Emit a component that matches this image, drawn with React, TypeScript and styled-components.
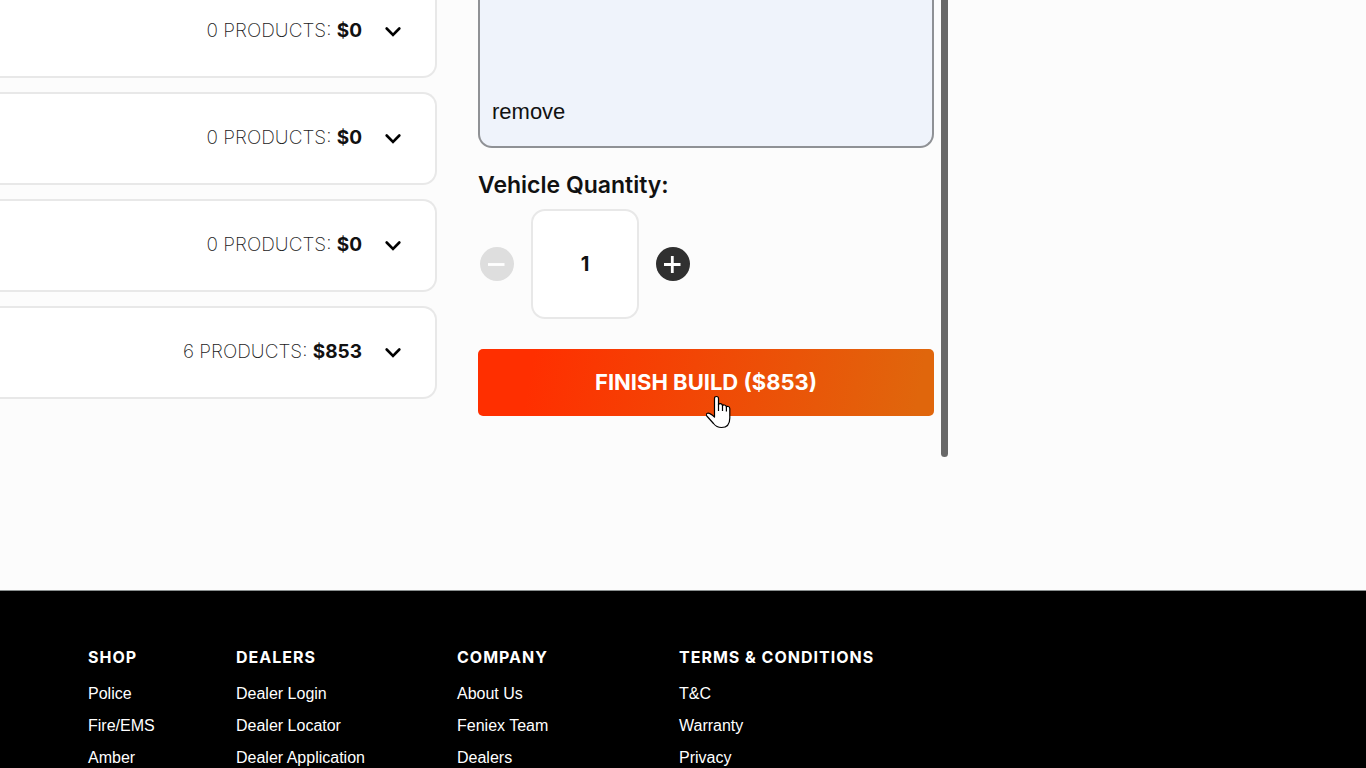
import React, { useState } from "react";
import styled, { createGlobalStyle } from "styled-components";

const GlobalStyle = createGlobalStyle`
  *, *::before, *::after { box-sizing: border-box; }
  body {
    margin: 0;
    background: #fcfcfc;
    color: #111;
    font-family: Inter, "Liberation Sans", sans-serif;
  }
  button, input { font-family: inherit; }
`;

const Page = styled.div`
  min-height: 100vh;
  display: flex;
  flex-direction: column;
`;

const Builder = styled.main`
  display: grid;
  grid-template-columns: 437fr 511fr 418fr;
  min-height: 590px;
  overflow: hidden;
`;

const Categories = styled.section`
  display: flex;
  flex-direction: column;
  gap: 14px;
  margin-top: -15px;
`;

const CategoryCard = styled.button`
  display: flex;
  align-items: center;
  justify-content: flex-end;
  gap: 23px;
  height: 93px;
  padding: 0 34px 2px 0;
  background: #fff;
  border: 2px solid #e8e8e8;
  border-left: 0;
  border-radius: 0 14px 14px 0;
  color: #111;
  cursor: pointer;
`;

const Summary = styled.span`
  color: #222;
  font-size: 19px;
  line-height: 24px;
  font-weight: 200;
  white-space: nowrap;
`;

const Price = styled.strong`
  color: #111;
  font-weight: 700;
`;

const Chevron = styled.svg`
  width: 16px;
  height: 10px;
  margin-top: 2px;
`;

const Side = styled.aside`
  display: flex;
  align-items: flex-start;
  gap: 7px;
  padding-left: 41px;
`;

const SideContent = styled.div`
  flex: 1;
  min-width: 0;
`;

const ScrollThumb = styled.div`
  width: 7px;
  height: 457px;
  border-radius: 0 0 4px 4px;
  background: #686868;
`;

const VehiclePanel = styled.div`
  display: flex;
  align-items: flex-end;
  height: 148px;
  padding: 0 12px 20px;
  background: #eff3fb;
  border: 2px solid #8f9195;
  border-top: 0;
  border-radius: 0 0 14px 14px;
`;

const RemoveButton = styled.button`
  padding: 0;
  border: 0;
  background: none;
  color: #111;
  font-family: "Liberation Sans", sans-serif;
  font-size: 22px;
  line-height: 28px;
  cursor: pointer;
`;

const QuantityLabel = styled.label`
  display: block;
  margin-top: 22px;
  font-size: 23px;
  line-height: 30px;
  font-weight: 600;
`;

const QuantityRow = styled.div`
  display: flex;
  align-items: center;
  gap: 17px;
  margin-top: 9px;
  padding-left: 2px;
`;

const StepButton = styled.button`
  display: flex;
  width: 34px;
  height: 34px;
  padding: 0;
  border: 0;
  border-radius: 50%;
  background: #303030;
  cursor: pointer;

  &:disabled {
    background: #dedede;
    cursor: default;
  }
`;

const QuantityInput = styled.input`
  width: 108px;
  height: 110px;
  padding: 0;
  border: 2px solid #e8e8e8;
  border-radius: 14px;
  background: #fff;
  color: #111;
  font-size: 20px;
  font-weight: 700;
  text-align: center;
`;

const FinishButton = styled.button`
  display: block;
  position: relative;
  width: 100%;
  height: 67px;
  margin-top: 30px;
  padding: 0 0 2px;
  border: 0;
  border-radius: 5px;
  background: linear-gradient(100deg, #ff2f00 12%, #e0660c 96%);
  color: #fff;
  font-size: 22px;
  line-height: 30px;
  font-weight: 700;
  cursor: pointer;
`;

const Pointer = styled.svg`
  position: absolute;
  left: 50%;
  top: 46px;
  width: 26px;
  height: 34px;
`;

const Footer = styled.footer`
  flex: 1;
  display: grid;
  grid-template-columns: 148fr 221fr 222fr 687fr;
  padding: 56px 0 0 88px;
  border-top: 1px solid #8a8f8f;
  background: #000;
  color: #fff;
`;

const FooterTitle = styled.h2`
  margin: 0 0 17px;
  font-size: 16px;
  line-height: 20px;
  font-weight: 700;
  letter-spacing: 1px;
  white-space: nowrap;
`;

const FooterList = styled.ul`
  display: flex;
  flex-direction: column;
  gap: 12px;
  margin: 0;
  padding: 0;
  list-style: none;
  font-family: "Liberation Sans", sans-serif;
  font-size: 16px;
  line-height: 20px;
  white-space: nowrap;
`;

const FooterLink = styled.a`
  display: block;
  color: #fff;
  text-decoration: none;
`;

const categories = [
  { count: 0, total: 0 },
  { count: 0, total: 0 },
  { count: 0, total: 0 },
  { count: 6, total: 853 },
];

const footerColumns = [
  { title: "SHOP", links: ["Police", "Fire/EMS", "Amber"] },
  { title: "DEALERS", links: ["Dealer Login", "Dealer Locator", "Dealer Application"] },
  { title: "COMPANY", links: ["About Us", "Feniex Team", "Dealers"] },
  { title: "TERMS & CONDITIONS", links: ["T&C", "Warranty", "Privacy"] },
];

export default function App() {
  const [quantity, setQuantity] = useState(1);

  return (
    <Page>
      <GlobalStyle />
      <Builder>
        <Categories>
          {categories.map(({ count, total }, i) => (
            <CategoryCard key={i} type="button">
              <Summary>
                {count} PRODUCTS: <Price>${total}</Price>
              </Summary>
              <Chevron viewBox="0 0 16 10" fill="none" stroke="#000" strokeWidth="2.6" strokeLinecap="round" aria-hidden="true">
                <path d="M1.7 1.5 L8 7.8 L14.3 1.5" />
              </Chevron>
            </CategoryCard>
          ))}
        </Categories>
        <Side>
          <SideContent>
            <VehiclePanel>
              <RemoveButton type="button">remove</RemoveButton>
            </VehiclePanel>
            <QuantityLabel htmlFor="quantity">Vehicle Quantity:</QuantityLabel>
            <QuantityRow>
              <StepButton
                type="button"
                aria-label="Decrease quantity"
                disabled={quantity <= 1}
                onClick={() => setQuantity(quantity - 1)}
              >
                <svg width="34" height="34" viewBox="0 0 34 34" stroke="#fff" strokeWidth="2.8">
                  <path d="M8 17.5H24.5" />
                </svg>
              </StepButton>
              <QuantityInput
                id="quantity"
                type="text"
                inputMode="numeric"
                value={quantity}
                onChange={(e) => setQuantity(Math.max(1, Number(e.target.value) || 1))}
              />
              <StepButton type="button" aria-label="Increase quantity" onClick={() => setQuantity(quantity + 1)}>
                <svg width="34" height="34" viewBox="0 0 34 34" stroke="#fff" strokeWidth="2.8">
                  <path d="M8 17.5H24.5M16.3 9V26" />
                </svg>
              </StepButton>
            </QuantityRow>
            <FinishButton type="button">
              FINISH BUILD ($853)
              <Pointer viewBox="0 0 26 34" aria-hidden="true">
                <path
                  d="M8.5 20V3.5Q8.5 1.5 10.5 1.5Q12.5 1.5 12.5 3.5V9.5Q13 8.5 14.5 8.7Q16.3 9 16.5 10.5Q17.2 9.7 18.5 10Q20.2 10.3 20.4 11.8Q21.2 11 22.4 11.5Q23.8 12 23.8 13.8V23Q23.8 32.5 15.5 32.5Q10.5 32.5 7.5 28.5L0.8 21Q-.5 19 1.5 18.3Q3.5 17.6 8.5 22Z"
                  fill="#fff"
                  stroke="#000"
                  strokeWidth="1.2"
                  strokeLinejoin="round"
                />
                <path d="M12.5 9V16M16.5 10V16M20.4 11.5V16.5" fill="none" stroke="#000" strokeWidth="1.2" />
              </Pointer>
            </FinishButton>
          </SideContent>
          <ScrollThumb />
        </Side>
      </Builder>
      <Footer>
        {footerColumns.map(({ title, links }) => (
          <nav key={title} aria-label={title}>
            <FooterTitle>{title}</FooterTitle>
            <FooterList>
              {links.map((link) => (
                <li key={link}>
                  <FooterLink href="#">{link}</FooterLink>
                </li>
              ))}
            </FooterList>
          </nav>
        ))}
      </Footer>
    </Page>
  );
}
